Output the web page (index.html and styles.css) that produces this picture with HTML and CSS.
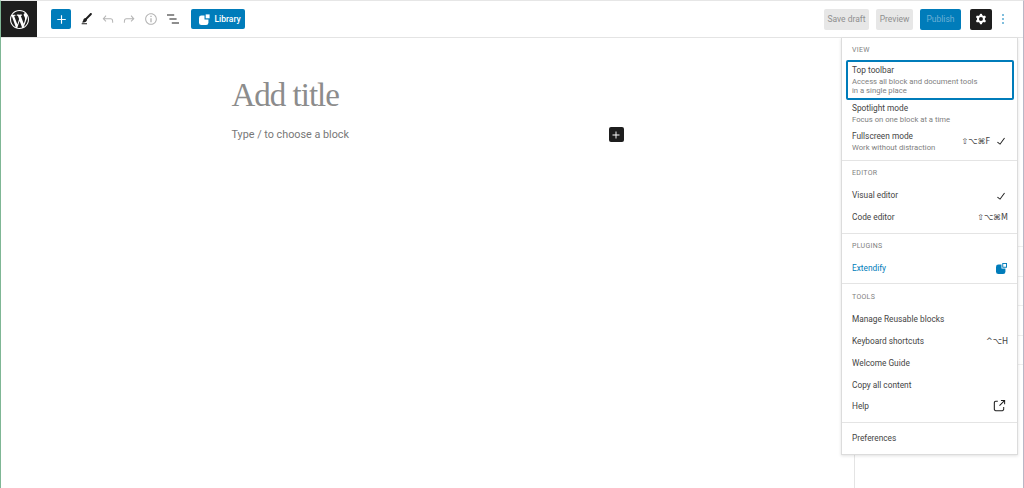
FILE: index.html
```html
<!DOCTYPE html>
<html lang="en">
<head>
    <meta charset="UTF-8">
    <meta name="viewport" content="width=device-width, initial-scale=1.0">
    <title>Add New Post</title>
    <link rel="stylesheet" href="styles.css">
</head>
<body>
    <div class="app">
        <!-- top bar -->
        <header class="topbar">
            <a class="wp-logo" href="#">
                <svg viewBox="0 0 20 20" width="19" height="19"><path fill="#fff" d="M20 10c0-5.51-4.49-10-10-10C4.48 0 0 4.49 0 10c0 5.52 4.48 10 10 10 5.51 0 10-4.48 10-10zM7.78 15.37L4.37 6.22c.55-.02 1.17-.08 1.17-.08.5-.06.44-1.13-.06-1.11 0 0-1.45.11-2.37.11-.18 0-.37 0-.58-.01C4.12 2.69 6.87 1.11 10 1.11c2.33 0 4.45.87 6.05 2.34-.68-.11-1.65.39-1.65 1.58 0 .74.45 1.36.9 2.1.35.61.55 1.36.55 2.46 0 1.49-1.4 5-1.4 5l-3.03-8.37c.54-.02.82-.17.82-.17.5-.05.44-1.25-.06-1.22 0 0-1.44.12-2.38.12-.87 0-2.33-.12-2.33-.12-.5-.03-.56 1.2-.06 1.22l.92.08 1.26 3.41zM17.41 10c.24-.64.74-1.87.43-4.25.7 1.29 1.05 2.71 1.05 4.25 0 3.29-1.73 6.24-4.4 7.78.97-2.59 1.94-5.2 2.92-7.78zM6.1 18.09C3.12 16.65 1.11 13.53 1.11 10c0-1.3.23-2.48.72-3.59C3.25 10.3 4.67 14.2 6.1 18.09zm4.03-6.63l2.58 6.98c-.86.29-1.76.45-2.71.45-.79 0-1.57-.11-2.29-.33.81-2.38 1.62-4.74 2.42-7.1z"/></svg>
            </a>
            <div class="tools">
                <button class="btn-add">
                    <svg viewBox="0 0 24 24" width="17" height="17"><path fill="#fff" d="M18 11.2h-5.2V6h-1.6v5.2H6v1.6h5.2V18h1.6v-5.2H18z"/></svg>
                </button>
                <span class="tool tool-pencil">
                    <svg viewBox="0 0 24 24" width="16" height="16"><path fill="#1e1e1e" d="M4 20h8v-1.5H4V20zM18.9 3.5c-.6-.6-1.5-.6-2.1 0l-7.2 7.2c-.4-.1-.7 0-1.1.1-.5.2-1.5.7-1.9 2.2-.4 1.7-.8 2.2-1.1 2.7-.1.1-.2.3-.3.4l-.6 1.1H6c2 0 3.4-.4 4.7-1.4.8-.6 1.2-1.4 1.3-2.3 0-.3 0-.5-.1-.7L19 5.7c.5-.6.5-1.6-.1-2.2z"/></svg>
                </span>
                <span class="tool">
                    <svg viewBox="0 0 24 24" width="16" height="16"><path fill="#b4b4b4" d="M18.3 11.7c-.6-.6-1.4-.9-2.3-.9H6.7l2.9-3.3-1.1-1-4.5 5L8.5 16l1-1-2.7-2.7H16c.5 0 .9.2 1.3.5 1 1 1 3.4 1 4.5v.3h1.5v-.2c0-1.5 0-4.3-1.5-5.7z"/></svg>
                </span>
                <span class="tool">
                    <svg viewBox="0 0 24 24" width="16" height="16"><path fill="#b4b4b4" d="M15.6 6.5l-1.1 1 2.9 3.3H8c-.9 0-1.7.3-2.3.9-1.4 1.5-1.4 4.2-1.4 5.6v.2h1.5v-.3c0-1.1 0-3.5 1-4.5.3-.3.7-.5 1.3-.5h9.2L14.5 15l1.1 1.1 4.6-4.6-4.6-5z"/></svg>
                </span>
                <span class="tool">
                    <svg viewBox="0 0 24 24" width="16" height="16"><path fill="#b4b4b4" d="M12 3.2c-4.8 0-8.8 3.9-8.8 8.8 0 4.8 3.9 8.8 8.8 8.8 4.8 0 8.8-3.9 8.8-8.8 0-4.8-4-8.8-8.8-8.8zm0 16c-4 0-7.2-3.3-7.2-7.2C4.8 8 8 4.8 12 4.8s7.2 3.3 7.2 7.2c0 4-3.2 7.2-7.2 7.2zM11 17h2v-6h-2v6zm0-8h2V7h-2v2z"/></svg>
                </span>
                <span class="tool">
                    <svg viewBox="0 0 24 24" width="16" height="16"><path fill="#1e1e1e" d="M13.8 5.2H3v1.5h10.8V5.2zm-3.6 12v1.5H21v-1.5H10.2zm7.2-6H6.6v1.5h10.8v-1.5z"/></svg>
                </span>
                <button class="btn-library">
                    <svg viewBox="0 0 14 14" width="11" height="11"><rect fill="#fff" x="0" y="2" width="12" height="12" rx="3"/><rect fill="#007cba" x="7" y="0" width="7" height="7"/><rect fill="#fff" x="8.5" y=".5" width="5" height="5"/></svg>
                    Library
                </button>
            </div>
            <div class="actions">
                <button class="btn-muted btn-save">Save draft</button>
                <button class="btn-muted btn-preview">Preview</button>
                <button class="btn-publish">Publish</button>
                <button class="btn-settings">
                    <svg viewBox="0 0 24 24" width="16" height="16"><path fill="#fff" fill-rule="evenodd" d="M10.289 4.836A1 1 0 0111.275 4h1.306a1 1 0 01.987.836l.244 1.466c.787.26 1.503.679 2.108 1.218l1.393-.522a1 1 0 011.216.437l.653 1.13a1 1 0 01-.23 1.273l-1.148.944a6.025 6.025 0 010 2.435l1.149.946a1 1 0 01.23 1.272l-.653 1.13a1 1 0 01-1.216.437l-1.394-.522c-.605.54-1.32.958-2.108 1.218l-.244 1.466a1 1 0 01-.987.836h-1.306a1 1 0 01-.986-.836l-.244-1.466a5.995 5.995 0 01-2.108-1.218l-1.394.522a1 1 0 01-1.217-.436l-.653-1.131a1 1 0 01.23-1.272l1.149-.946a6.026 6.026 0 010-2.435l-1.148-.944a1 1 0 01-.23-1.272l.653-1.131a1 1 0 011.217-.437l1.393.522a5.994 5.994 0 012.108-1.218l.244-1.466zM14.929 12a3 3 0 11-6 0 3 3 0 016 0z"/></svg>
                </button>
                <span class="more">
                    <svg viewBox="0 0 24 24" width="16" height="16"><path fill="#007cba" d="M13 19h-2v-2h2v2zm0-6h-2v-2h2v2zm0-6h-2V5h2v2z"/></svg>
                </span>
            </div>
        </header>

        <div class="workspace">
            <!-- editor canvas -->
            <main class="canvas">
                <div class="canvas-inner">
                    <h1 class="post-title">Add title</h1>
                    <div class="block-row">
                        <p class="block-hint">Type / to choose a block</p>
                        <button class="btn-inserter">
                            <svg viewBox="0 0 24 24" width="14" height="14"><path fill="#fff" d="M18 11.2h-5.2V6h-1.6v5.2H6v1.6h5.2V18h1.6v-5.2H18z"/></svg>
                        </button>
                    </div>
                </div>
            </main>
            <!-- settings sidebar, mostly under the menu -->
            <aside class="sidebar">
                <div class="side-row side-row-first"></div>
                <div class="side-row"></div>
                <div class="side-row"></div>
                <div class="side-row"></div>
                <div class="side-row"></div>
            </aside>
        </div>

        <!-- options menu -->
        <nav class="menu">
            <div class="group group-view">
                <div class="group-label">VIEW</div>
                <div class="item item-tall item-active">
                    <div class="item-text">
                        <div class="item-name">Top toolbar</div>
                        <div class="item-desc">Access all block and document tools<br>in a single place</div>
                    </div>
                </div>
                <div class="item item-tall">
                    <div class="item-text">
                        <div class="item-name">Spotlight mode</div>
                        <div class="item-desc">Focus on one block at a time</div>
                    </div>
                </div>
                <div class="item item-tall">
                    <div class="item-text">
                        <div class="item-name">Fullscreen mode</div>
                        <div class="item-desc">Work without distraction</div>
                    </div>
                    <span class="shortcut shortcut-checked">⇧⌥⌘F</span>
                    <svg class="check" viewBox="0 0 24 24" width="16" height="16"><path fill="#1e1e1e" d="M16.7 7.1l-6.3 8.5-3.3-2.5-.9 1.2 4.5 3.4L17.9 8z"/></svg>
                </div>
            </div>
            <div class="group group-editor">
                <div class="group-label">EDITOR</div>
                <div class="item">
                    <span class="item-name">Visual editor</span>
                    <svg class="check" viewBox="0 0 24 24" width="16" height="16"><path fill="#1e1e1e" d="M16.7 7.1l-6.3 8.5-3.3-2.5-.9 1.2 4.5 3.4L17.9 8z"/></svg>
                </div>
                <div class="item">
                    <span class="item-name">Code editor</span>
                    <span class="shortcut">⇧⌥⌘M</span>
                </div>
            </div>
            <div class="group group-plugins">
                <div class="group-label">PLUGINS</div>
                <div class="item">
                    <span class="item-name item-link">Extendify</span>
                    <svg viewBox="0 0 14 14" width="11" height="11"><rect fill="#007cba" x="0" y="2" width="12" height="12" rx="3"/><rect fill="#fff" x="7" y="0" width="7" height="7"/><rect fill="#007cba" x="8" y="0" width="6" height="6"/><rect fill="#fff" x="9.2" y="1.2" width="3.6" height="3.6"/></svg>
                </div>
            </div>
            <div class="group group-tools">
                <div class="group-label">TOOLS</div>
                <div class="item"><span class="item-name">Manage Reusable blocks</span></div>
                <div class="item">
                    <span class="item-name">Keyboard shortcuts</span>
                    <span class="shortcut">^⌥H</span>
                </div>
                <div class="item"><span class="item-name">Welcome Guide</span></div>
                <div class="item"><span class="item-name">Copy all content</span></div>
                <div class="item item-help">
                    <span class="item-name">Help</span>
                    <svg viewBox="0 0 24 24" width="16" height="16"><path fill="#1e1e1e" d="M18.2 17c0 .7-.6 1.2-1.2 1.2H7c-.7 0-1.2-.6-1.2-1.2V7c0-.7.6-1.2 1.2-1.2h3.2V4.2H7C5.5 4.2 4.2 5.5 4.2 7v10c0 1.5 1.2 2.8 2.8 2.8h10c1.5 0 2.8-1.2 2.8-2.8v-3.6h-1.5V17zM14.9 3v1.5h3.7l-6.4 6.4 1.1 1.1 6.4-6.4v3.7h1.5V3h-6.8z"/></svg>
                </div>
            </div>
            <div class="group group-prefs">
                <div class="item"><span class="item-name">Preferences</span></div>
            </div>
        </nav>
    </div>
</body>
</html>
```

FILE: styles.css
```css
:root {
    --primary-color: #007cba;
    --dark-color: #1e1e1e;
    --border-color: #e4e4e4;
    --text-color: #444;
    --muted-color: #808080;
}
* {
    box-sizing: border-box;
}
html, body {
    margin: 0;
    height: 100%;
    overflow: hidden;
}
body {
    font-family: Roboto, 'Liberation Sans', sans-serif;
    background-color: #fff;
    color: var(--text-color);
}
button {
    font-family: inherit;
    border: none;
    padding: 0;
    cursor: pointer;
}
svg {
    display: block;
}
.app {
    position: relative;
    display: flex;
    flex-direction: column;
    height: 488px;
    border-top: 1px solid #e6e6e6;
    border-left: 1px solid #7fb795;
    border-right: 1px solid #b9b7c6;
}
.topbar {
    display: flex;
    align-items: center;
    height: 37px;
    flex-shrink: 0;
    border-bottom: 1px solid var(--border-color);
}
.wp-logo {
    display: flex;
    align-items: center;
    justify-content: center;
    width: 36px;
    height: 36px;
    background-color: var(--dark-color);
}
.tools {
    display: flex;
    align-items: center;
    margin-left: 14px;
}
.btn-add {
    display: flex;
    align-items: center;
    justify-content: center;
    width: 20px;
    height: 20px;
    margin-right: 4px;
    border-radius: 2px;
    background-color: var(--primary-color);
}
.tool {
    display: flex;
    align-items: center;
    justify-content: center;
    width: 21.7px;
    height: 20px;
}
.tool-pencil svg {
    margin-left: 2px;
}
.btn-library {
    display: flex;
    align-items: center;
    gap: 4px;
    height: 20px;
    width: 54px;
    margin-left: 8px;
    padding-left: 8px;
    border-radius: 2px;
    font-size: 8.5px;
    font-weight: 500;
    color: #fff;
    background-color: var(--primary-color);
}
.actions {
    display: flex;
    align-items: center;
    margin-left: auto;
    padding-right: 9px;
}
.btn-muted, .btn-publish {
    height: 21px;
    border-radius: 2px;
    font-size: 8.5px;
}
.btn-muted {
    color: #8f8f8f;
    background-color: #e7e7e7;
}
.btn-save {
    width: 45px;
    margin-right: 7px;
}
.btn-preview {
    width: 37px;
    margin-right: 7px;
}
.btn-publish {
    width: 41px;
    margin-right: 9px;
    color: #6cb0d6;
    background-color: var(--primary-color);
}
.btn-settings {
    display: flex;
    align-items: center;
    justify-content: center;
    width: 22px;
    height: 21px;
    border-radius: 2px;
    background-color: var(--dark-color);
}
.more {
    display: flex;
    justify-content: center;
    width: 22px;
}
.workspace {
    display: flex;
    flex: 1;
    min-height: 0;
}
.canvas {
    flex: 1;
}
.canvas-inner {
    width: 392px;
    margin: 0 auto;
    padding-top: 37px;
}
.post-title {
    margin: 0;
    font-family: 'Liberation Serif', serif;
    font-size: 33px;
    font-weight: 400;
    letter-spacing: -1px;
    line-height: 40px;
    color: #8c8c8c;
}
.block-row {
    display: flex;
    align-items: center;
    justify-content: space-between;
    margin-top: 12px;
}
.block-hint {
    margin: 0;
    font-size: 10.8px;
    color: #777;
}
.btn-inserter {
    display: flex;
    align-items: center;
    justify-content: center;
    width: 15px;
    height: 15px;
    border-radius: 2px;
    background-color: var(--dark-color);
}
.sidebar {
    width: 169px;
    flex-shrink: 0;
    border-left: 1px solid var(--border-color);
}
.side-row {
    height: 29.5px;
    border-bottom: 1px solid #eee;
}
.side-row-first {
    height: 209px;
}
.menu {
    position: absolute;
    top: 37px;
    left: 840px;
    width: 177px;
    background-color: #fff;
    border: 1px solid #dcdcdc;
    border-top: none;
    box-shadow: 0 1px 3px rgba(0, 0, 0, 0.12);
}
.group {
    padding: 0 4px;
    border-bottom: 1px solid var(--border-color);
}
.group:last-child {
    border-bottom: none;
}
.group-view {
    padding-bottom: 5px;
}
.group-editor {
    padding-bottom: 5px;
}
.group-editor .item {
    min-height: 21.5px;
}
.group-editor .group-label {
    margin-bottom: 2px;
}
.group-plugins {
    padding-bottom: 4px;
}
.group-plugins .group-label {
    margin-bottom: 1px;
}
.group-tools {
    padding-top: 1px;
    padding-bottom: 4px;
}
.group-tools .group-label {
    margin-bottom: 1px;
}
.group-prefs {
    padding-top: 4px;
    padding-bottom: 5px;
}
.group-label {
    display: flex;
    align-items: center;
    height: 22px;
    padding: 2px 6px 0;
    font-size: 7px;
    letter-spacing: 0.3px;
    color: var(--muted-color);
}
.item {
    display: flex;
    align-items: center;
    justify-content: space-between;
    min-height: 22px;
    padding: 0 6px;
    font-size: 8.3px;
}
.item-tall {
    min-height: 27.5px;
}
.item-active {
    min-height: 40px;
    margin-right: -1px;
    border: 2px solid var(--primary-color);
    border-radius: 2px;
    padding: 0 4px;
}
.item-help {
    margin-top: -1px;
    margin-bottom: 1px;
}
.item-text {
    flex: 1;
}
.item-name {
    line-height: 11px;
    color: var(--text-color);
}
.item-link {
    color: var(--primary-color);
}
.item-desc {
    margin-top: 1px;
    font-size: 7.7px;
    line-height: 9.5px;
    color: var(--muted-color);
}
.shortcut {
    margin-right: -1px;
    font-size: 8px;
    font-family: 'DejaVu Sans', sans-serif;
    color: var(--text-color);
}
.shortcut-checked {
    margin-right: 3px;
}
.check {
    margin-right: -2px;
}
```
